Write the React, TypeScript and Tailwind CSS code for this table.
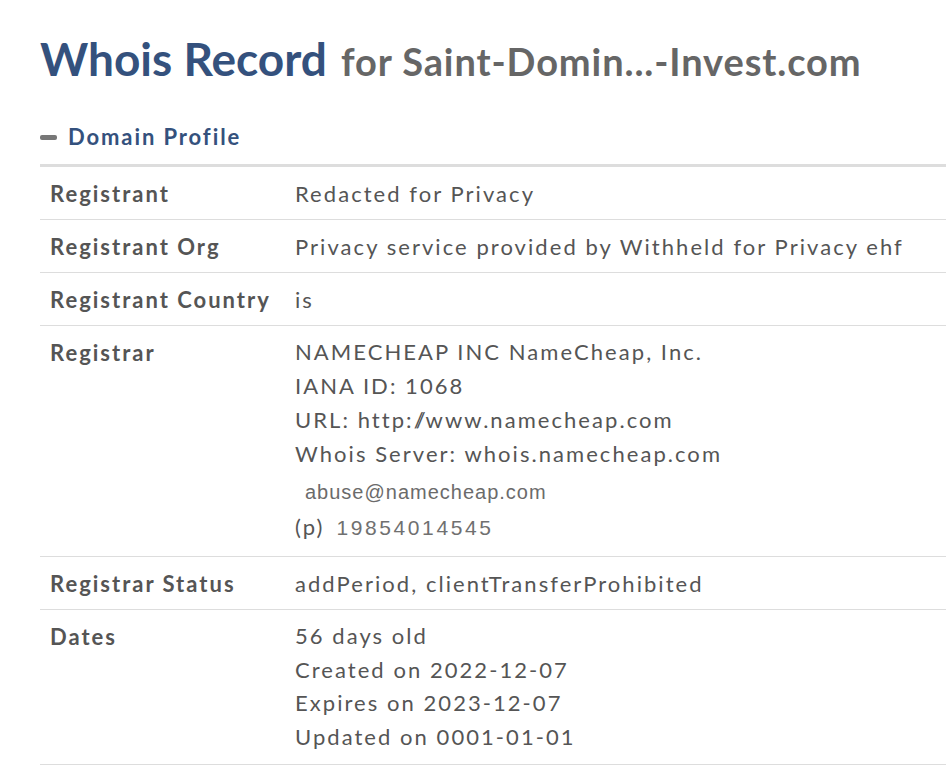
import React from "react";

const Row = ({ label, children, pb = "pb-[11px]" }: { label: string; children: React.ReactNode; pb?: string }) => (
  <div className="flex border-b border-[#dddddd]">
    <div className="w-[255px] shrink-0 pl-[10px] pt-[12px] pb-[11px] font-bold text-[22px] leading-[29px] text-[#555555] tracking-[2px]">{label}</div>
    <div className={`flex-1 pt-[12px] ${pb} text-[22px] leading-[29px] text-[#555555] tracking-[2.05px]`}>{children}</div>
  </div>
);

export default function App() {
  return (
    <div className="bg-white w-[946px] h-[766px] overflow-hidden" style={{ fontFamily: "Lato, 'Open Sans', sans-serif" }}>
      <div className="pl-[40px] pt-[31px]">
        <h1 className="whitespace-nowrap leading-[56px]">
          <span className="text-[46px] font-bold text-[#34517d]">Whois Record</span>
          <span className="ml-[4px] text-[38px] font-bold text-[#666666] tracking-[0.9px]"> for Saint-Domin...-Invest.com</span>
        </h1>
        <div className="mt-[24px] flex items-center gap-[11px]">
          <span className="block w-[17px] h-[5px] rounded-[2px] bg-[#777777]" />
          <span className="text-[22px] font-bold text-[#34517d] tracking-[1.9px] leading-[30px]">Domain Profile</span>
        </div>
        <div className="mt-[12px] border-t-[3px] border-[#dddddd]">
          <Row label="Registrant">Redacted for Privacy</Row>
          <Row label="Registrant Org">Privacy service provided by Withheld for Privacy ehf</Row>
          <Row label="Registrant Country">is</Row>
          <Row label="Registrar">
            <div className="leading-[34px] -mt-[3px]">
              <div>NAMECHEAP INC NameCheap, Inc.</div>
              <div>IANA ID: 1068</div>
              <div>URL: http:<span className="tracking-[-3px]">//</span><span className="ml-[3px]">www.namecheap.com</span></div>
              <div>Whois Server: whois.namecheap.com</div>
              <div className="pl-[10px] pt-[3px] text-[20px] leading-[36px] text-[#6b6b6b] tracking-[1px]" style={{ fontFamily: "'Liberation Sans', Arial, sans-serif" }}>abuse@namecheap.com</div>
              <div className="flex items-baseline">
                <span>(p)</span>
                <span className="ml-[12px] text-[21px] text-[#707070] tracking-[2.6px]" style={{ fontFamily: "'Liberation Sans', Arial, sans-serif" }}>19854014545</span>
              </div>
            </div>
          </Row>
          <Row label="Registrar Status">addPeriod, clientTransferProhibited</Row>
          <Row label="Dates" pb="pb-[10px]">
            <div className="leading-[33.7px] -mt-[3px]">
              <div>56 days old</div>
              <div>Created on 2022-12-07</div>
              <div>Expires on 2023-12-07</div>
              <div>Updated on 0001-01-01</div>
            </div>
          </Row>
        </div>
      </div>
    </div>
  );
}
